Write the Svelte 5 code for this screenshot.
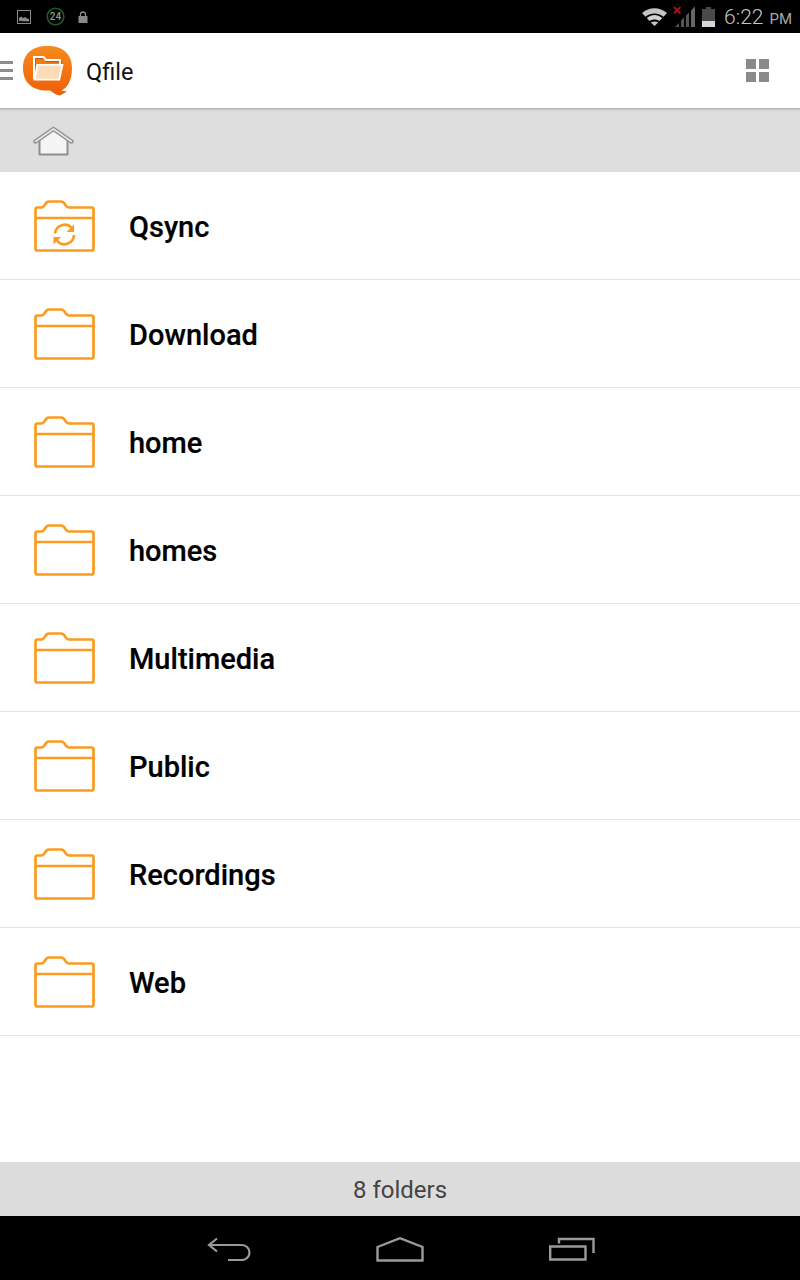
<script lang="ts">
	const folders = ['Qsync', 'Download', 'home', 'homes', 'Multimedia', 'Public', 'Recordings', 'Web'];
</script>

<div class="screen">
	<header class="status">
		<div class="status-left">
			<svg class="s-img" width="14" height="14" viewBox="0 0 14 14">
				<rect x="0.5" y="0.5" width="13" height="13" fill="none" stroke="#8a8a8a" />
				<path d="M2 11V8l2-1.500L6 8l2-1 2 1.500 2 .5v2.500z" fill="#8a8a8a" />
			</svg>
			<svg class="s-timer" width="19" height="19" viewBox="0 0 19 19">
				<circle cx="9.500" cy="9.500" r="8.300" fill="none" stroke="#1f5a24" stroke-width="1.600" />
				<text x="9.500" y="13" text-anchor="middle">24</text>
			</svg>
			<svg class="s-lock" width="10" height="12" viewBox="0 0 10 12">
				<path d="M2.500 5V3.500a2.500 2.500 0 0 1 5 0V5" fill="none" stroke="#8a8a8a" stroke-width="1.300" />
				<rect x="0.500" y="5" width="9" height="7" fill="#8a8a8a" />
			</svg>
		</div>
		<div class="status-right">
			<svg class="s-wifi" width="25" height="18" viewBox="0 0 25 18">
				<path d="M0 5C7-1.500 18-1.500 25 5L21.500 8.800C16 4.500 9 4.500 3.500 8.800z" fill="#c4c4c4" />
				<path d="M4.800 10C10 6 15 6 20.200 10L17.500 13C14.500 11 10.500 11 7.500 13z" fill="#d0d0d0" />
				<path d="M8.800 14.500C11.500 13 13.500 13 16.200 14.500L12.500 18z" fill="#c4c4c4" />
			</svg>
			<svg class="s-signal" width="23" height="21" viewBox="0 0 23 21">
				<path d="M2 21L6 17V21zM8 21V14.500L11 11.500V21zM13 21V9.500L16 6.500V21z" fill="#555" />
				<path d="M18 21V4.500L22 .5V21z" fill="#666" />
				<path d="M1 1l6.500 6.500M7.500 1L1 7.500" stroke="#a3161c" stroke-width="1.800" />
			</svg>
			<svg class="s-battery" width="13" height="20" viewBox="0 0 13 20">
				<path d="M4 0h5v2h4v18H0V2h4z" fill="#4a4a4a" />
				<rect y="14" width="13" height="6" fill="#d6d6d6" />
			</svg>
			<span class="clock">6:22</span>
			<span class="ampm">PM</span>
		</div>
	</header>

	<div class="appbar">
		<div class="burger"><i></i><i></i><i></i></div>
		<svg class="logo" width="50" height="50" viewBox="0 0 50 50">
			<defs>
				<linearGradient id="logo-fill" x1="0" y1="0" x2="0" y2="1">
					<stop offset="0" stop-color="#f78a1d" />
					<stop offset="1" stop-color="#ef5f06" />
				</linearGradient>
			</defs>
			<path d="M24.500 0C40 0 49 8 49 22C49 36 43 43 38 44.500L44 45.500L37 49.500C34 49.500 30 46.500 27 44.500C10 45.500 0 37 0 22C0 8 9 0 24.500 0z" fill="url(#logo-fill)" />
			<path d="M12 35V12.500h9l2.500 3h14.500v5" fill="none" stroke="#8d3a08" stroke-width="1.500" opacity="0.5" />
			<path d="M11 33V11h9.500l2.500 3h14v4" fill="none" stroke="#fff" stroke-width="2" />
			<path d="M13.500 18H40.500L37 34.500H10.500z" fill="#fff" />
			<path d="M15.200 19.800H38.200L35.500 32.700H12.800z" fill="#fcdcb6" />
		</svg>
		<span class="title">Qfile</span>
		<div class="grid-toggle"><i></i><i></i><i></i><i></i></div>
	</div>

	<div class="crumbs">
		<svg width="41" height="30" viewBox="0 0 41 30">
			<path d="M6.500 13V28.500H34.500V13L20.500 3z" fill="#f4f4f4" stroke="#8e8e8e" stroke-width="2" stroke-linejoin="round" />
			<path d="M2.500 15.500L20.500 3L38.500 15.500" fill="none" stroke="#8e8e8e" stroke-width="4.400" stroke-linejoin="round" stroke-linecap="round" />
			<path d="M2.500 15.500L20.500 3L38.500 15.500" fill="none" stroke="#e6e6e6" stroke-width="1.600" stroke-linejoin="round" stroke-linecap="round" />
		</svg>
	</div>

	<ul class="list">
		{#each folders as name, i}
			<li class="row">
				<svg class="folder" width="61" height="52" viewBox="0 0 61 52">
					<path d="M1.500 9.500V48.500a2 2 0 0 0 2 2H57.500a2 2 0 0 0 2-2V9.500a2 2 0 0 0-2-2H35c-1.500 0-2.500-.7-3.500-2.400C30.500 3 29 1.500 27 1.500H15c-2 0-3.200 1.500-4.200 3.300C10 6.500 9 7.500 7 7.500H3.500a2 2 0 0 0-2 2zM1.500 18H59.500" fill="none" stroke="#fb9b1f" stroke-width="2.700" stroke-linejoin="round" />
					{#if i === 0}
						<g fill="none" stroke="#fb9b1f" stroke-width="2.700">
							<path d="M21 33.500a9.500 9.500 0 0 1 17-5" />
							<path d="M40 35a9.500 9.500 0 0 1-17 5.500" />
						</g>
						<path d="M40 24.500v7.500h-7.500zM19.500 44.500V37h7.500z" fill="#fb9b1f" />
					{/if}
				</svg>
				<span class="name">{name}</span>
			</li>
		{/each}
	</ul>

	<div class="summary"><span>8 folders</span></div>

	<nav class="navbar">
		<svg width="44" height="24" viewBox="0 0 44 24">
			<path d="M10 1.500L2 8l8 6.500M2 8H35a7.500 7.500 0 0 1 0 15H21" fill="none" stroke="#9a9a9a" stroke-width="2.200" />
		</svg>
		<svg width="48" height="25" viewBox="0 0 48 25">
			<path d="M1.500 10L24 1.200L46.500 10V23.500H1.500z" fill="none" stroke="#9a9a9a" stroke-width="2.400" />
		</svg>
		<svg width="46" height="24" viewBox="0 0 46 24">
			<path d="M1.200 9.500H36.500V22.500H1.200zM10 6.500V2H44.500V16" fill="none" stroke="#9a9a9a" stroke-width="2.400" />
		</svg>
	</nav>
</div>

<style>
	:global(body) {
		margin: 0;
		background: #fff;
	}
	.screen {
		width: 800px;
		height: 1280px;
		display: flex;
		flex-direction: column;
		font-family: Roboto, 'Liberation Sans', sans-serif;
		overflow: hidden;
	}
	.status {
		height: 33px;
		background: #000;
		display: flex;
		justify-content: space-between;
		align-items: center;
		flex: none;
	}
	.status-left {
		display: flex;
		align-items: center;
		padding-left: 17px;
	}
	.s-timer {
		margin-left: 15px;
	}
	.s-timer text {
		font-size: 10px;
		font-weight: 500;
		fill: #7fa583;
	}
	.s-lock {
		margin-left: 13px;
	}
	.status-right {
		display: flex;
		align-items: center;
		padding-right: 8px;
	}
	.s-signal {
		margin-left: 6px;
	}
	.s-battery {
		margin-left: 6px;
	}
	.clock {
		margin-left: 9px;
		font-size: 21px;
		font-weight: 300;
		color: #c4c4c4;
	}
	.ampm {
		margin-left: 6px;
		margin-top: 4px;
		font-size: 15px;
		color: #a8a8a8;
	}
	.appbar {
		height: 75px;
		background: #fff;
		display: flex;
		align-items: center;
		flex: none;
		border-bottom: 1px solid #b5b5b5;
	}
	.burger {
		width: 13px;
		display: flex;
		flex-direction: column;
		gap: 5px;
	}
	.burger i {
		height: 3px;
		background: #8c8c8c;
	}
	.logo {
		margin-left: 10px;
	}
	.title {
		margin-left: 13px;
		margin-top: 2px;
		font-size: 23.500px;
		color: #111;
	}
	.grid-toggle {
		margin-left: auto;
		margin-right: 31px;
		display: grid;
		grid-template-columns: 10px 10px;
		gap: 3px;
	}
	.grid-toggle i {
		height: 10px;
		background: #8a8a8a;
	}
	.crumbs {
		height: 63px;
		background: #dedede;
		flex: none;
		display: flex;
		align-items: center;
		padding-left: 33px;
		box-sizing: border-box;
		box-shadow: inset 0 2px 2px -1px rgba(0, 0, 0, 0.12);
	}
	.list {
		margin: 0;
		padding: 0;
		list-style: none;
		flex: 1;
	}
	.row {
		height: 108px;
		box-sizing: border-box;
		border-bottom: 1px solid #e2e2e2;
		display: flex;
		align-items: center;
		padding-left: 34px;
	}
	.folder {
		flex: none;
	}
	.name {
		margin-left: 34px;
		margin-top: 2px;
		font-size: 29px;
		font-weight: 500;
		color: #000;
		-webkit-text-stroke: 0.2px #000;
	}
	.summary {
		height: 54px;
		flex: none;
		background: #dcdcdc;
		color: #444;
		font-size: 24px;
		display: flex;
		align-items: center;
		justify-content: center;
	}
	.summary span {
		margin-top: 2px;
	}
	.navbar {
		height: 64px;
		flex: none;
		background: #000;
		display: flex;
		align-items: center;
		justify-content: center;
		gap: 125px;
		padding: 2px 0 0 2px;
		box-sizing: border-box;
	}
</style>
